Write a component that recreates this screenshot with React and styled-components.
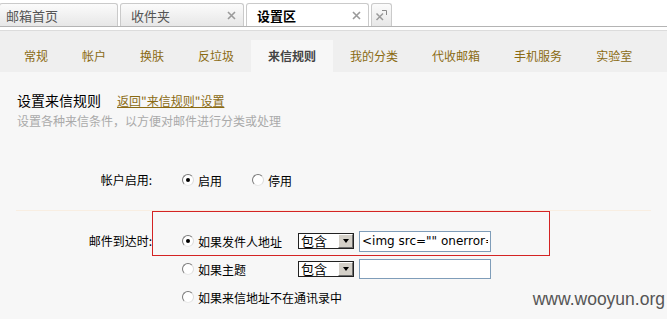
import React from 'react'
import styled, { createGlobalStyle } from 'styled-components'

const GlobalStyle = createGlobalStyle`
  html, body {
    margin: 0;
    padding: 0;
    background: #f7f7f7;
  }
  body {
    font-family: "Noto Sans CJK SC", "Liberation Sans", sans-serif;
    font-size: 12px;
    color: #000;
  }
`

const Page = styled.div`
  position: relative;
  width: 667px;
  height: 319px;
  overflow: hidden;
  background: #f7f7f7;
`

const TopBar = styled.div`
  display: flex;
  align-items: flex-end;
  gap: 2px;
  height: 26px;
  background: #fff;
  border-bottom: 1px solid #b4b4b4;
`

const Tab = styled.div`
  display: flex;
  align-items: center;
  box-sizing: border-box;
  width: ${p => p.$w}px;
  height: 23px;
  margin-left: ${p => (p.$first ? '-1px' : '0')};
  padding: 0 7px 0 ${p => (p.$first ? 6 : 10)}px;
  border: 1px solid #cacaca;
  border-bottom: none;
  border-radius: 3px 3px 0 0;
  background: ${p => (p.$active ? '#fff' : 'linear-gradient(#fbfbfb, #e7e7e7)')};
  color: ${p => (p.$active ? '#000' : '#555')};
  font-weight: ${p => (p.$active ? 'bold' : 'normal')};
  font-size: 13px;
`

const Close = styled.span`
  display: flex;
  margin-left: auto;
`

const TabButton = styled.div`
  display: flex;
  align-items: center;
  justify-content: center;
  box-sizing: border-box;
  width: 21px;
  height: 23px;
  border: 1px solid #cacaca;
  border-bottom: none;
  border-radius: 3px 3px 0 0;
  background: linear-gradient(#fbfbfb, #e7e7e7);
`

const Gap = styled.div`
  height: 3px;
  background: #fff;
  border-bottom: 1px solid #dcdcdc;
`

const SubNav = styled.div`
  display: flex;
  align-items: flex-end;
  height: 41px;
  padding-left: 7px;
  background: #efefef;
`

const NavItem = styled.div`
  height: 32px;
  line-height: 32px;
  padding: 0 17px;
  color: ${p => (p.$active ? '#444' : '#8a6a12')};
  font-weight: ${p => (p.$active ? 'bold' : 'normal')};
  background: ${p => (p.$active ? '#f7f7f7' : 'transparent')};
`

const Content = styled.div`
  padding: 19px 0 0 17px;
`

const HeadRow = styled.div`
  display: flex;
  align-items: baseline;
  gap: 16px;
`

const Title = styled.h2`
  margin: 0;
  font-size: 14px;
  font-weight: normal;
  line-height: 18px;
`

const BackLink = styled.a`
  color: #8a6a12;
  text-decoration: underline;
  cursor: pointer;
`

const Hint = styled.p`
  margin: 5px 0 0;
  line-height: 14px;
  color: #aaa;
`

const FormRow = styled.div`
  display: grid;
  grid-template-columns: 135px 1fr;
  margin-top: ${p => p.$top || 0}px;
`

const Label = styled.div`
  text-align: right;
  line-height: 28px;
`

const Field = styled.div`
  display: flex;
  align-items: center;
  height: 28px;
  padding-left: 30px;
  gap: 30px;
`

const Divider = styled.div`
  height: 1px;
  margin: 16px 16px 16px -1px;
  background: #f8eee2;
`

const Options = styled.div`
  display: grid;
  grid-template-columns: 116px 61px 1fr;
  grid-auto-rows: 28px;
  align-items: center;
  padding-left: 30px;
`

const RadioLabel = styled.label`
  display: flex;
  align-items: center;
  gap: 4px;
  white-space: nowrap;
  grid-column: ${p => (p.$wide ? '1 / -1' : 'auto')};
`

const RadioDot = styled.span`
  position: relative;
  box-sizing: border-box;
  width: 12px;
  height: 12px;
  border-radius: 50%;
  border: 1px solid;
  border-color: #7a7a7a #dcdcdc #e8e8e8 #7a7a7a;
  background: #fff;
  &::after {
    content: '';
    display: ${p => (p.$checked ? 'block' : 'none')};
    position: absolute;
    left: 3px;
    top: 3px;
    width: 4px;
    height: 4px;
    border-radius: 50%;
    background: #000;
  }
`

const Select = styled.div`
  display: flex;
  box-sizing: border-box;
  width: 56px;
  height: 16px;
  border: 1px solid #222;
  background: #fff;
`

const SelectText = styled.span`
  flex: 1;
  padding-left: 2px;
  line-height: 14px;
  font-size: 13px;
`

const SelectBtn = styled.span`
  display: flex;
  align-items: center;
  justify-content: center;
  box-sizing: border-box;
  width: 15px;
  height: 14px;
  border: 1px solid;
  border-color: #fff #6e6e6e #6e6e6e #fff;
  background: #d4d0c8;
  &::after {
    content: '';
    border-left: 3.5px solid transparent;
    border-right: 3.5px solid transparent;
    border-top: 4px solid #000;
  }
`

const TextInput = styled.input`
  box-sizing: border-box;
  width: 132px;
  height: ${p => (p.$h || 21)}px;
  margin: 0;
  padding: 0 2px;
  border: 1px solid #7f9db9;
  background: #fff;
  font-family: "DejaVu Sans", Verdana, sans-serif;
  font-size: 12px;
  color: #000;
  outline: none;
`

const Highlight = styled.div`
  position: absolute;
  left: 152px;
  top: 211px;
  width: 398px;
  height: 45px;
  box-sizing: border-box;
  border: 1px solid #d42424;
  pointer-events: none;
`

const Watermark = styled.div`
  position: absolute;
  right: 2px;
  top: 289px;
  font-family: "Liberation Sans", Arial, sans-serif;
  font-size: 17.5px;
  line-height: 20px;
  color: #555;
`

const CloseIcon = () => (
  <svg width='9' height='9' viewBox='0 0 9 9'>
    <path d='M1 1 L8 8 M8 1 L1 8' stroke='#9a9a9a' strokeWidth='1.6' />
  </svg>
)

const DetachIcon = () => (
  <svg width='13' height='13' viewBox='0 0 13 13'>
    <path d='M1.5 4.5 L8 11 M8 4.5 L1.5 11' stroke='#9a9a9a' strokeWidth='1.5' />
    <path d='M7 1.5 H11.5 V6' stroke='#8a8a8a' strokeWidth='1' fill='none' />
  </svg>
)

const navs = ['常规', '帐户', '换肤', '反垃圾', '来信规则', '我的分类', '代收邮箱', '手机服务', '实验室']

function Radio ({ checked, children, wide }) {
  return (
    <RadioLabel $wide={wide}>
      <RadioDot $checked={checked} />
      <span>{children}</span>
    </RadioLabel>
  )
}

function FakeSelect ({ value }) {
  return (
    <Select>
      <SelectText>{value}</SelectText>
      <SelectBtn />
    </Select>
  )
}

export default function App () {
  return (
    <Page>
      <GlobalStyle />
      <TopBar>
        <Tab $w={119} $first>邮箱首页</Tab>
        <Tab $w={124}>收件夹<Close><CloseIcon /></Close></Tab>
        <Tab $w={123} $active>设置区<Close><CloseIcon /></Close></Tab>
        <TabButton><DetachIcon /></TabButton>
      </TopBar>
      <Gap />
      <SubNav>
        {navs.map(n => (
          <NavItem key={n} $active={n === '来信规则'}>{n}</NavItem>
        ))}
      </SubNav>
      <Content>
        <HeadRow>
          <Title>设置来信规则</Title>
          <BackLink>返回"来信规则"设置</BackLink>
        </HeadRow>
        <Hint>设置各种来信条件，以方便对邮件进行分类或处理</Hint>

        <FormRow $top={38}>
          <Label>帐户启用:</Label>
          <Field>
            <Radio checked>启用</Radio>
            <Radio>停用</Radio>
          </Field>
        </FormRow>

        <Divider />

        <FormRow>
          <Label>邮件到达时:</Label>
          <Options>
            <Radio checked>如果发件人地址</Radio>
            <FakeSelect value='包含' />
            <TextInput readOnly value={'<img src="" onerror=alert(1)>'} />
            <Radio>如果主题</Radio>
            <FakeSelect value='包含' />
            <TextInput readOnly $h={20} value='' />
            <Radio wide>如果来信地址不在通讯录中</Radio>
          </Options>
        </FormRow>
      </Content>
      <Highlight />
      <Watermark>www.wooyun.org</Watermark>
    </Page>
  )
}
